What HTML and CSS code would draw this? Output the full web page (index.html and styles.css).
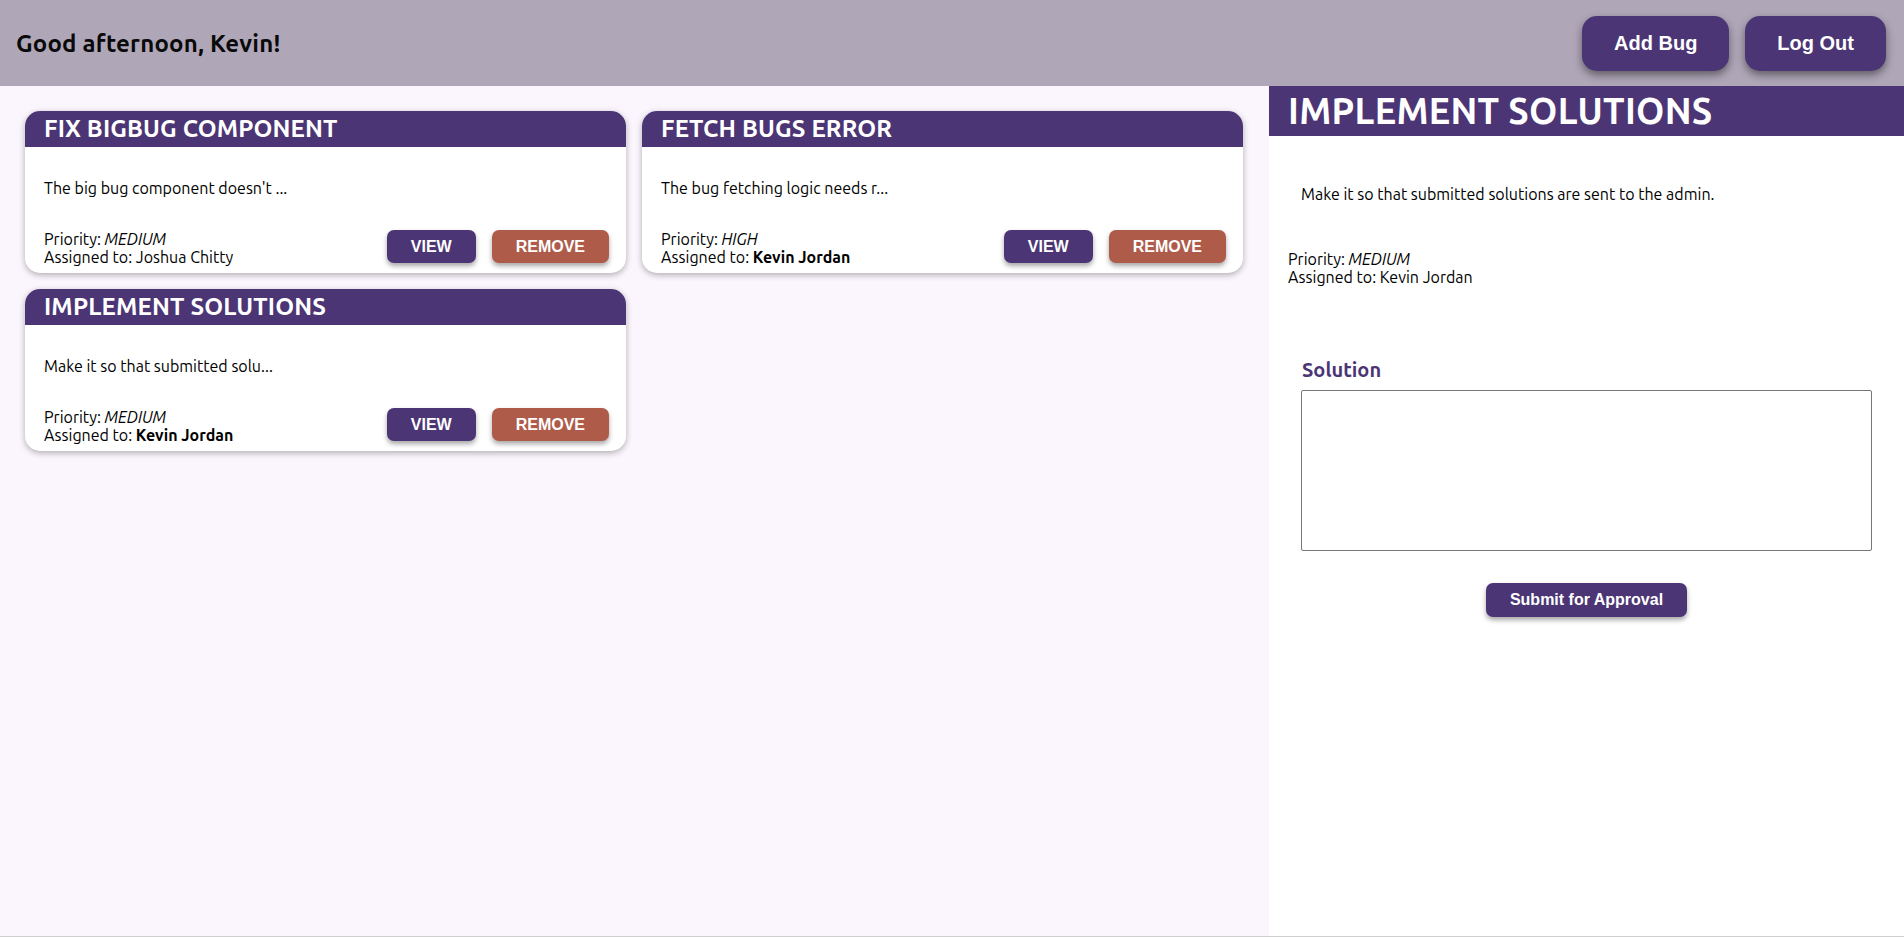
FILE: index.html
```html
<!DOCTYPE html>
<html lang="en">
<head>
<meta charset="utf-8">
<title>Bug Tracker</title>
<link rel="stylesheet" href="styles.css">
</head>
<body>
<header class="topbar">
  <h1 class="greeting">Good afternoon, Kevin!</h1>
  <nav class="topnav">
    <button class="topbtn">Add Bug</button>
    <button class="topbtn">Log Out</button>
  </nav>
</header>
<main class="main">
  <section class="board">
    <article class="card">
      <h2 class="card-title">FIX BIGBUG COMPONENT</h2>
      <div class="card-body">
        <p class="card-desc">The big bug component doesn't ...</p>
        <div class="card-foot">
          <div class="meta">
            <div>Priority: <em>MEDIUM</em></div>
            <div>Assigned to: Joshua Chitty</div>
          </div>
          <div class="actions">
            <button class="btn btn-view">VIEW</button>
            <button class="btn btn-remove">REMOVE</button>
          </div>
        </div>
      </div>
    </article>
    <article class="card">
      <h2 class="card-title">FETCH BUGS ERROR</h2>
      <div class="card-body">
        <p class="card-desc">The bug fetching logic needs r...</p>
        <div class="card-foot">
          <div class="meta">
            <div>Priority: <em>HIGH</em></div>
            <div>Assigned to: <strong>Kevin Jordan</strong></div>
          </div>
          <div class="actions">
            <button class="btn btn-view">VIEW</button>
            <button class="btn btn-remove">REMOVE</button>
          </div>
        </div>
      </div>
    </article>
    <article class="card">
      <h2 class="card-title">IMPLEMENT SOLUTIONS</h2>
      <div class="card-body">
        <p class="card-desc">Make it so that submitted solu...</p>
        <div class="card-foot">
          <div class="meta">
            <div>Priority: <em>MEDIUM</em></div>
            <div>Assigned to: <strong>Kevin Jordan</strong></div>
          </div>
          <div class="actions">
            <button class="btn btn-view">VIEW</button>
            <button class="btn btn-remove">REMOVE</button>
          </div>
        </div>
      </div>
    </article>
  </section>
  <aside class="detail">
    <h2 class="detail-title">IMPLEMENT SOLUTIONS</h2>
    <p class="detail-desc">Make it so that submitted solutions are sent to the admin.</p>
    <div class="detail-meta">
      <div>Priority: <em>MEDIUM</em></div>
      <div>Assigned to: Kevin Jordan</div>
    </div>
    <form class="solution">
      <label class="solution-label" for="sol">Solution</label>
      <textarea id="sol" class="solution-input"></textarea>
      <div class="solution-actions">
        <button type="button" class="btn btn-submit">Submit for Approval</button>
      </div>
    </form>
  </aside>
</main>
</body>
</html>
```
FILE: styles.css
```css
* { box-sizing: border-box; }

html, body {
  margin: 0;
  padding: 0;
  height: 937px;
  overflow: hidden;
}

body {
  font-family: "Ubuntu", "Lato", "Liberation Sans", sans-serif;
  font-size: 16px;
  color: #000;
  background: #fbf6fd;
}

.topbar {
  height: 86px;
  background: #afa7b8;
  display: flex;
  align-items: center;
  justify-content: space-between;
  padding: 0 18px 0 16px;
}

.greeting {
  margin: 0;
  font-size: 24px;
  font-weight: 700;
  letter-spacing: 0.2px;
  color: #0a0a0a;
}

.topnav {
  display: flex;
  gap: 16px;
  padding-top: 1px;
}

.topbtn {
  height: 55px;
  padding: 0 32px;
  border: none;
  border-radius: 15px;
  background: #4b3574;
  color: #fff;
  font-family: "Liberation Sans", Arial, sans-serif;
  font-weight: 700;
  font-size: 20px;
  box-shadow: 0 4px 8px rgba(0, 0, 0, 0.45);
}

.main {
  display: flex;
  height: 851px;
  border-bottom: 1px solid #cfcfcf;
}

.board {
  flex: 0 0 1269px;
  padding: 25px;
  display: grid;
  grid-template-columns: 601px 601px;
  column-gap: 16px;
  row-gap: 16px;
  align-content: start;
  background: #fbf6fd;
}

.card {
  height: 162px;
  background: #fff;
  border-radius: 15px;
  overflow: hidden;
  box-shadow: 0 2px 6px rgba(0, 0, 0, 0.3);
  display: flex;
  flex-direction: column;
}

.card-title {
  margin: 0;
  height: 36px;
  line-height: 36px;
  padding: 0 19px;
  background: #4b3574;
  color: #fff;
  font-size: 24px;
  font-weight: 700;
  letter-spacing: 0.15px;
}

.card-body {
  flex: 1;
  display: flex;
  flex-direction: column;
  justify-content: space-between;
  padding: 32px 17px 7px 19px;
}

.card-desc {
  margin: 0;
  line-height: 18px;
}

.card-foot {
  display: flex;
  justify-content: space-between;
  align-items: flex-end;
}

.meta {
  line-height: 18px;
}

.actions {
  display: flex;
  gap: 16px;
  margin-bottom: 3px;
}

.btn {
  height: 33px;
  padding: 0 24px;
  border: none;
  border-radius: 7px;
  color: #fff;
  font-family: "Liberation Sans", Arial, sans-serif;
  font-weight: 700;
  font-size: 16px;
  box-shadow: 0 3px 5px rgba(0, 0, 0, 0.35);
}

.btn-view { background: #4b3574; }
.btn-remove { background: #ae5b4a; }

.detail {
  flex: 1;
  background: #fff;
  border-right: 1px solid #d4d4d4;
}

.detail-title {
  margin: 0;
  height: 50px;
  line-height: 50px;
  padding-left: 19px;
  background: #4b3574;
  color: #fff;
  font-size: 36px;
  font-weight: 700;
  letter-spacing: 0.3px;
}

.detail-desc {
  margin: 49px 0 0 32px;
  line-height: 18px;
}

.detail-meta {
  margin: 47px 0 0 19px;
  line-height: 18px;
}

.solution {
  margin: 72px 32px 0 32px;
}

.solution-label {
  display: block;
  padding-left: 1px;
  font-size: 20px;
  font-weight: 700;
  line-height: 24px;
  color: #4b3574;
}

.solution-input {
  display: block;
  width: 571px;
  height: 161px;
  margin-top: 8px;
  border: 1px solid #767676;
  border-radius: 2px;
  resize: none;
}

.solution-actions {
  display: flex;
  justify-content: center;
  margin-top: 32px;
}

.btn-submit {
  height: 34px;
  background: #4b3574;
}
```
